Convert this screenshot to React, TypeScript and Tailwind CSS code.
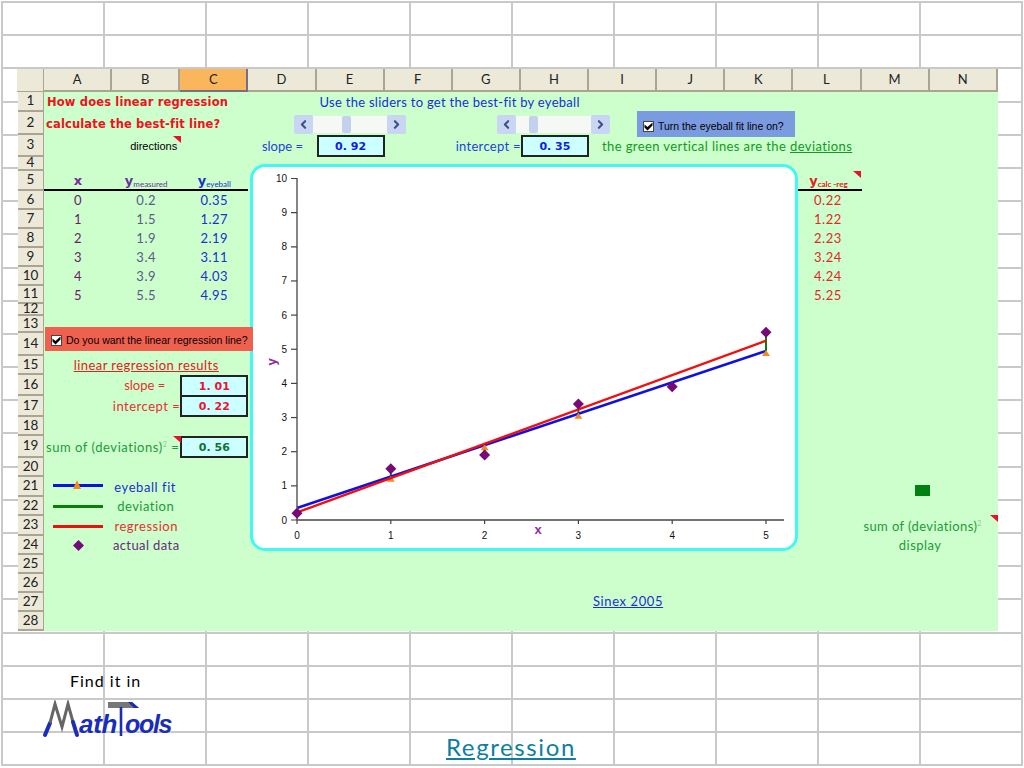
import React from "react";
import { ChevronLeft, ChevronRight } from "lucide-react";

const comic = "font-['Lato','Noto_Sans',sans-serif]";
const cols = ["A","B","C","D","E","F","G","H","I","J","K","L","M","N"];
const rowHeights = [20,23,22,14,20,19,19,19,19,19,18,12,17,23,19,21,21,19,22,19,20,19,20,19,19,19,19,19];

const xVals = [0,1,2,3,4,5];
const measured = ["0.2","1.5","1.9","3.4","3.9","5.5"];
const eyeball = ["0.35","1.27","2.19","3.11","4.03","4.95"];
const calc = ["0.22","1.22","2.23","3.24","4.24","5.25"];
const measuredN = [0.2,1.5,1.9,3.4,3.9,5.5];
const eyeN = [0.35,1.27,2.19,3.11,4.03,4.95];

const px = (x: number) => 297 + x * 93.8;
const py = (y: number) => 520 - y * 34.15;

function Marker({ className }: { className: string }) {
  return (
    <svg className={`absolute ${className}`} width="8" height="7" viewBox="0 0 8 7">
      <path d="M0 0 L8 0 L8 7 Z" fill="#e8102a" />
    </svg>
  );
}

function CheckBox() {
  return (
    <div className="w-[11px] h-[11px] bg-white border border-[#444] flex items-center justify-center shrink-0">
      <svg width="9" height="9" viewBox="0 0 9 9">
        <path d="M0.5 2.5 L3.5 5 L8.5 0.5 L8.5 3.5 L3.5 8.5 L0.5 5.5 Z" fill="#000" />
      </svg>
    </div>
  );
}

function Slider({ className, thumb }: { className: string; thumb: string }) {
  return (
    <div className={`absolute flex items-center h-[19px] w-[112px] ${className}`}>
      <div className="w-[19px] h-[19px] bg-[#c9d6f3] rounded-[2px] flex items-center justify-center">
        <ChevronLeft size={13} strokeWidth={4} className="text-[#3d5286]" />
      </div>
      <div className="relative flex-1 h-[17px] bg-[#f6f8f6]">
        <div className={`absolute top-0 w-[9px] h-[17px] bg-[#c3d0ee] rounded-[2px] ${thumb}`} />
      </div>
      <div className="w-[19px] h-[19px] bg-[#c9d6f3] rounded-[2px] flex items-center justify-center">
        <ChevronRight size={13} strokeWidth={4} className="text-[#3d5286]" />
      </div>
    </div>
  );
}

function Chart() {
  return (
    <div className="absolute left-[206px] top-[72px] w-[548px] h-[387px] border-[3px] border-[#40f8f4] rounded-[15px] bg-white overflow-hidden">
      <svg className="block w-full h-full" viewBox="253 167 542 381" fontFamily="'Liberation Sans',sans-serif" fontSize="10">
        <line x1="297" y1="178" x2="297" y2="520" stroke="#444" strokeWidth="1.3" />
        <line x1="297" y1="520" x2="784" y2="520" stroke="#444" strokeWidth="1.3" />
        {[0,1,2,3,4,5,6,7,8,9,10].map((v) => (
          <g key={v}>
            <line x1="291" x2="297" y1={py(v)} y2={py(v)} stroke="#444" strokeWidth="1.2" />
            <text x="287" y={py(v) + 3.5} textAnchor="end" fill="#111">{v}</text>
          </g>
        ))}
        {xVals.map((v) => (
          <g key={v}>
            <line x1={px(v)} x2={px(v)} y1="520" y2="524" stroke="#444" strokeWidth="1.2" />
            <text x={px(v)} y="539" textAnchor="middle" fill="#111">{v}</text>
          </g>
        ))}
        <text x="538" y="534" textAnchor="middle" fill="#9030a0" fontWeight="bold" fontSize="13">x</text>
        <text transform="translate(276 362) rotate(-90)" textAnchor="middle" fill="#9030a0" fontWeight="bold" fontSize="13">y</text>
        {xVals.map((v, i) => (
          <line key={v} x1={px(v)} x2={px(v)} y1={py(measuredN[i])} y2={py(eyeN[i])} stroke="#0a7d0a" strokeWidth="2" />
        ))}
        <line x1={px(0)} y1={py(0.35)} x2={px(5)} y2={py(4.95)} stroke="#1010e0" strokeWidth="2.6" />
        {xVals.map((v, i) => (
          <path key={v} d={`M${px(v)} ${py(eyeN[i]) - 1} l4 6 h-8 Z`} fill="#f08a20" />
        ))}
        <line x1={px(0)} y1={py(0.22)} x2={px(5)} y2={py(5.25)} stroke="#f01010" strokeWidth="2.4" />
        {xVals.map((v, i) => (
          <path key={v} d={`M${px(v)} ${py(measuredN[i]) - 5.5} l5.5 5.5 l-5.5 5.5 l-5.5 -5.5 Z`} fill="#760a76" />
        ))}
      </svg>
    </div>
  );
}

export default function App() {
  return (
    <div className="relative w-[1024px] h-[768px] overflow-hidden bg-white">
      {/* slide table background */}
      <div className="ml-px mt-px w-[1022px] grid grid-cols-[repeat(10,102px)] grid-rows-[repeat(23,33.2px)] border-r-2 border-b-2 border-[#c9c9c9]">
        {Array.from({ length: 230 }).map((_, i) => (
          <div key={i} className="border-l-2 border-t-2 border-[#c9c9c9]" />
        ))}
      </div>

      {/* embedded spreadsheet */}
      <div className={`absolute left-[17px] top-[69px] w-[981px] ${comic}`}>
        <div className="flex h-[23px]">
          <div className="w-[27px] bg-[#ece9d8] border-b border-r border-[#a9a592]" />
          {cols.map((c) => (
            <div
              key={c}
              className={`w-[68.14px] flex items-center justify-center text-[13px] text-[#222] border-r-2 border-b-2 ${c === "C" ? "bg-[#f9b65c] border-[#7a6f80]" : "bg-[#ece9d8] border-[#a9a592]"}`}
            >
              {c}
            </div>
          ))}
        </div>
        <div className="flex">
          <div className="w-[27px] pl-px flex flex-col">
            {rowHeights.map((h, i) => (
              <div
                key={i}
                style={{ height: h }}
                className="bg-[#ece9d8] border-b-2 border-r border-[#a9a592] flex items-center justify-center text-[13.5px] leading-none text-[#222]"
              >
                {i + 1}
              </div>
            ))}
          </div>

          <div
            className="relative bg-[#ccffcc] w-[954px] grid grid-cols-[repeat(14,68.14px)] text-[13px] leading-none whitespace-nowrap"
            style={{ gridTemplateRows: rowHeights.map((h) => `${h}px`).join(" ") }}
          >
            {/* headline */}
            <div className="col-start-1 col-span-4 row-start-1 flex items-center pl-[3px] pt-[2px] font-['DejaVu_Sans',sans-serif] font-bold text-[11.5px] tracking-[0.15px] text-[#f01020]">How does linear regression</div>
            <div className="col-start-1 col-span-4 row-start-2 flex items-center pl-[2px] pt-[3px] font-['DejaVu_Sans',sans-serif] font-bold text-[11.5px] tracking-[0.15px] text-[#f01020]">calculate the best-fit line?</div>
            <div className="col-start-2 row-start-3 relative flex items-center justify-center pl-[15px] font-['Liberation_Sans',sans-serif] text-[11px] text-black">
              directions
            </div>

            <div className="col-start-5 col-span-5 row-start-1 flex items-center pl-[3px] text-[#1530d8] tracking-[0.28px]">Use the sliders to get the best-fit by eyeball</div>
            <div className="col-start-4 row-start-3 flex items-center justify-center text-[#2244dd]">slope =</div>
            <div className="col-start-5 row-start-3 border-2 border-[#222] bg-[#ccffff] flex items-center justify-center font-['DejaVu_Sans',sans-serif] font-bold text-[11px] text-[#1020e0]">0. 92</div>
            <div className="col-start-7 row-start-3 flex items-center justify-end text-[#2244dd] tracking-[0.3px]">intercept =</div>
            <div className="col-start-8 row-start-3 border-2 border-[#222] bg-[#ccffff] flex items-center justify-center font-['DejaVu_Sans',sans-serif] font-bold text-[11px] text-[#1020e0]">0. 35</div>
            <div className="col-start-9 col-span-6 row-start-3 flex items-center pl-[13px] text-[#119a22] tracking-[0.4px]">
              <span>the green vertical lines are the&nbsp;<span className="underline">deviations</span></span>
            </div>

            {/* column heads */}
            <div className="col-start-1 row-start-5 border-b-2 border-black flex items-end justify-center pb-[2px] font-['DejaVu_Sans',sans-serif] font-bold text-[13px] text-[#7a2a9a]">x</div>
            <div className="col-start-2 row-start-5 border-b-2 border-black flex items-end justify-center pb-[2px] text-[#66339a]">
              <span className="font-bold font-['DejaVu_Sans',sans-serif] text-[13px]">y</span>
              <span className="text-[8px] mb-[-1px]">measured</span>
            </div>
            <div className="col-start-3 row-start-5 border-b-2 border-black flex items-end justify-center pb-[2px] text-[#1a30c8]">
              <span className="font-bold font-['DejaVu_Sans',sans-serif] text-[13px]">y</span>
              <span className="text-[8px] mb-[-1px]">eyeball</span>
            </div>
            <div className="col-start-12 row-start-5 border-b-2 border-black flex items-end justify-center pb-[2px] pl-[2px] text-[#e02020]">
              <span className="font-bold font-['DejaVu_Sans',sans-serif] text-[13px]">y</span>
              <span className="text-[8px] font-bold mb-[-1px]">calc -reg</span>
            </div>

            {/* data rows */}
            {xVals.map((v, i) => (
              <React.Fragment key={v}>
                <div style={{ gridRow: i + 6 }} className="col-start-1 flex items-center justify-center text-[#6a1a6a] tracking-[0.5px]">{v}</div>
                <div style={{ gridRow: i + 6 }} className="col-start-2 flex items-center justify-center text-[#5a5a8a] tracking-[0.5px]">{measured[i]}</div>
                <div style={{ gridRow: i + 6 }} className="col-start-3 flex items-center justify-center text-[#1a30d0] tracking-[0.5px]">{eyeball[i]}</div>
                <div style={{ gridRow: i + 6 }} className="col-start-12 flex items-center justify-center pl-[1px] text-[#e02828] tracking-[0.5px]">{calc[i]}</div>
              </React.Fragment>
            ))}

            {/* regression results */}
            <div className="col-start-2 row-start-15 flex items-center justify-center text-[#e02020] tracking-[0.45px]"><span className="underline">linear regression results</span></div>
            <div className="col-start-2 row-start-16 flex items-center justify-center pr-[3px] text-[#e83030]">slope =</div>
            <div className="col-start-2 row-start-17 flex items-center justify-end text-[#e83030] tracking-[0.5px]">intercept =</div>
            <div className="col-start-3 row-start-16 border-2 border-b border-[#222] bg-[#ccffff] flex items-center justify-center font-['DejaVu_Sans',sans-serif] font-bold text-[11px] text-[#f01030]">1. 01</div>
            <div className="col-start-3 row-start-17 border-2 border-t border-[#222] bg-[#ccffff] flex items-center justify-center font-['DejaVu_Sans',sans-serif] font-bold text-[11px] text-[#f01030]">0. 22</div>
            <div className="col-start-1 col-span-2 row-start-19 flex items-center pl-[2px] text-[#1f9a3a] tracking-[0.55px]">sum of (deviations)<sup className="text-[7px] text-[#88cc88]">2</sup>&nbsp;=</div>
            <div className="col-start-3 row-start-19 border-2 border-[#222] bg-[#ccffff] flex items-center justify-center font-['DejaVu_Sans',sans-serif] font-bold text-[11px] text-[#107030]">0. 56</div>

            {/* legend */}
            <div className="col-start-1 row-start-21 flex items-center justify-center mt-[-3px]">
              <div className="relative w-[50px] h-[3px] bg-[#1010e0]">
                <svg className="absolute left-[20px] top-[-4px]" width="8" height="9" viewBox="0 0 8 9"><path d="M4 0 L8 9 L0 9 Z" fill="#f08a20" /></svg>
              </div>
            </div>
            <div className="col-start-2 row-start-21 flex items-center justify-center pr-[2px] text-[#1a30d0] tracking-[0.55px]">eyeball fit</div>
            <div className="col-start-1 row-start-22 flex items-center justify-center"><div className="w-[50px] h-[3px] bg-[#0a7d0a]" /></div>
            <div className="col-start-2 row-start-22 flex items-center justify-center pr-[1px] text-[#1c9a3a] tracking-[0.5px]">deviation</div>
            <div className="col-start-1 row-start-23 flex items-center justify-center"><div className="w-[50px] h-[3px] bg-[#e81010]" /></div>
            <div className="col-start-2 row-start-23 flex items-center justify-center text-[#e83030] tracking-[0.5px]">regression</div>
            <div className="col-start-1 row-start-24 flex items-center justify-center">
              <svg width="11" height="11" viewBox="0 0 11 11"><path d="M5.5 0 L11 5.5 L5.5 11 L0 5.5 Z" fill="#760a76" /></svg>
            </div>
            <div className="col-start-2 row-start-24 flex items-center justify-center text-[#6a2a7a] tracking-[0.4px]">actual data</div>

            {/* right side */}
            <div className="col-start-13 row-start-21 flex justify-end items-end mb-[1px]"><div className="w-[15px] h-[11px] bg-[#008010]" /></div>
            <div className="col-start-13 col-span-2 row-start-23 flex items-center justify-center pr-[14px] text-[#1f9a3a] tracking-[0.4px]">sum of (deviations)<sup className="text-[7px] text-[#88cc88]">2</sup></div>
            <div className="col-start-13 col-span-2 row-start-24 flex items-center justify-center pr-[19px] text-[#1f9a3a] tracking-[0.45px]">display</div>

            <div className="col-start-9 col-span-2 row-start-27 flex items-center pb-[2px] pl-[4px] text-[#1a30d0] tracking-[0.6px]"><span className="underline">Sinex 2005</span></div>

            {/* floating objects on the sheet */}
            <Chart />
            <Slider className="left-[250px] top-[23px]" thumb="left-[29px]" />
            <Slider className="left-[453px] top-[23px] w-[113px]" thumb="left-[13px]" />
            <div className="absolute left-[593px] top-[19px] w-[158px] h-[26px] bg-[#7b9be0] flex items-center gap-[4px] pl-[6px] pt-[4px] font-['Liberation_Sans',sans-serif] text-[10.5px] text-black">
              <CheckBox />
              <span>Turn the eyeball fit line on?</span>
            </div>
            <div className="absolute left-[1px] top-[235px] w-[208px] h-[24px] bg-[#f0604f] flex items-center gap-[4px] pl-[6px] pt-[2px] font-['Liberation_Sans',sans-serif] text-[10.5px] text-black">
              <CheckBox />
              <span>Do you want the linear regression line?</span>
            </div>
            <Marker className="left-[129px] top-[44px]" />
            <Marker className="left-[129px] top-[344px]" />
            <Marker className="left-[809px] top-[79px]" />
            <Marker className="left-[946px] top-[423px]" />
          </div>
        </div>
      </div>

      {/* footer */}
      <div className="absolute left-[70px] top-[671px] font-['Lato',sans-serif] text-[16px] leading-[20px] tracking-[1px] text-black">Find it in</div>
      <div className="absolute left-[42px] top-[700px] w-[132px] h-[40px]">
        <svg className="absolute inset-0" width="132" height="40" viewBox="0 0 132 40" fill="none">
          <path d="M3 35 L8 23" stroke="#1a2db8" strokeWidth="4" strokeLinecap="round" />
          <path d="M8 23 L13 4 L20 27 L26 4 L31 22" stroke="#666" strokeWidth="3" />
          <path d="M31 22 L35 35" stroke="#1a2db8" strokeWidth="4" strokeLinecap="round" />
          <path d="M66 2 H90 L97 8 H66 Z" fill="#777" />
          <path d="M90 2 L97 8 L92 8 L86 2 Z" fill="#1a2db8" />
          <line x1="79" y1="7" x2="79" y2="36" stroke="#1a2db8" strokeWidth="2.6" />
        </svg>
        <span className="absolute left-[37px] top-[9px] font-['Liberation_Sans',sans-serif] font-bold italic text-[26px] leading-[30px] tracking-[-0.3px] text-[#1a2db8]">ath</span>
        <span className="absolute left-[83px] top-[9px] font-['Liberation_Sans',sans-serif] font-bold italic text-[25px] leading-[30px] tracking-[-1.3px] text-[#1a2db8]">ools</span>
      </div>
      <div className={`absolute left-[446px] top-[732px] text-[24px] leading-[30px] tracking-[1.6px] underline text-[#0e7f9f] ${comic}`}>Regression</div>
    </div>
  );
}
